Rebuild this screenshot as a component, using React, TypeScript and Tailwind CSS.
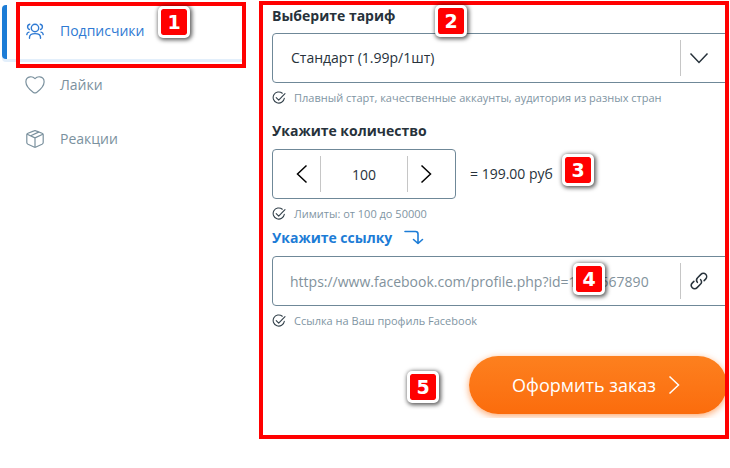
import { useState } from 'react';
import type { ReactNode } from 'react';
import clsx from 'clsx';

const MIN_COUNT = 100;
const MAX_COUNT = 50000;
const PRICE = 1.99;

function UsersIcon() {
  return (
    <svg viewBox="0 0 18 16" className="w-[18px] h-4" fill="none" stroke="currentColor" strokeWidth="1.4" strokeLinecap="round">
      <circle cx="9" cy="5" r="3.7" />
      <path d="M3.500 15.200v-1c0-2.300 2-3.600 5.500-3.600s5.500 1.300 5.500 3.600v1" />
      <path d="M3.800 1.200C2.300 1.500 1.500 2.600 1.600 4.100c.1 1.100.7 2 1.800 2.400M14.200 1.200c1.500.3 2.300 1.400 2.200 2.900-.1 1.100-.7 2-1.800 2.400" />
      <path d="M.8 11.600c.1-1.400.8-2.300 2.200-2.500M17.200 11.600c-.1-1.400-.8-2.300-2.200-2.500" />
    </svg>
  );
}

function HeartIcon() {
  return (
    <svg viewBox="0 0 20 18" className="w-5 h-[18px]" fill="none" stroke="currentColor" strokeWidth="1.2" strokeLinejoin="round">
      <path d="M10 2.600C8.600 1.100 6.800.6 5.200.8 2.600 1.100.8 3.100.9 6 1 9.800 4.200 13.400 8.400 16.400c1 .7 2.200.7 3.200 0C15.800 13.400 19 9.800 19.100 6 19.200 3.100 17.400 1.100 14.800.8 13.200.6 11.400 1.100 10 2.600Z" />
    </svg>
  );
}

function BoxIcon() {
  return (
    <svg viewBox="0 0 18 18" className="w-[18px] h-[18px]" fill="none" stroke="currentColor" strokeWidth="1.2" strokeLinejoin="round" strokeLinecap="round">
      <path d="M8 .9 2 3.300C1.200 3.600.8 4.200.8 5v7.500c0 .9.4 1.400 1.200 1.800l6 2.700c.7.3 1.300.3 2 0l6-2.700c.8-.4 1.200-.9 1.200-1.800V5c0-.8-.4-1.400-1.200-1.700L10 .9C9.300.6 8.700.6 8 .9Z" />
      <path d="M1.200 4.300 9 7.900l7.800-3.600M9 7.900v9M4.700 5.800l7.900-3.700" />
    </svg>
  );
}

function CheckIcon() {
  return (
    <svg viewBox="0 0 14 14" className="w-3.5 h-3.5 shrink-0 text-[#34424c]" fill="none" stroke="currentColor" strokeWidth="1.1" strokeLinecap="round" strokeLinejoin="round">
      <path d="M10.300 2.200A5.600 5.600 0 1 0 12.300 7.400" />
      <path d="m4.200 6.600 2.500 2.600 6.300-6.600" />
    </svg>
  );
}

function LinkIcon() {
  return (
    <svg viewBox="0 0 18 18" className="w-[18px] h-[18px]" fill="none" stroke="currentColor" strokeWidth="1.5" strokeLinecap="round">
      <path d="M7.400 10.400C6.200 8.900 6.300 7 7.600 5.700l3.300-3.300c1.400-1.400 3.500-1.400 4.800-.1s1.300 3.400-.1 4.800l-1.500 1.500" />
      <path d="M10.600 7.600c1.200 1.500 1.100 3.400-.2 4.700l-3.300 3.300c-1.400 1.400-3.500 1.400-4.800.1s-1.300-3.400.1-4.800l1.500-1.500" />
    </svg>
  );
}

function TurnDownIcon() {
  return (
    <svg viewBox="0 0 20 16" className="w-5 h-4" fill="none" stroke="currentColor" strokeWidth="1.600" strokeLinecap="round" strokeLinejoin="round">
      <path d="M1 1.500h10.500c1.500 0 2.500 1 2.500 2.500V13.500M9.500 9.500l4.500 4 4.500-4" />
    </svg>
  );
}

function ChevronIcon({ className }: { className?: string }) {
  return (
    <svg viewBox="0 0 12 20" className={clsx('w-3 h-5 shrink-0', className)} fill="none" stroke="currentColor" strokeWidth="1.500">
      <path d="m1.500 1.500 9 8.500-9 8.500" />
    </svg>
  );
}

const TABS = [
  { id: 'followers', label: 'Подписчики', icon: <UsersIcon /> },
  { id: 'likes', label: 'Лайки', icon: <HeartIcon /> },
  { id: 'reactions', label: 'Реакции', icon: <BoxIcon /> },
];

function StepBadge({ n, className }: { n: number; className: string }) {
  return (
    <span
      className={clsx(
        'absolute flex items-center justify-center w-8 h-8 rounded-[5px] border-3 border-white bg-[#ff0000] bg-clip-padding',
        "font-['DejaVu_Sans'] text-[19px] leading-none font-bold text-white",
        'shadow-[1px_1px_4px_1px_rgba(0,0,0,0.65)]',
        className,
      )}
    >
      {n}
    </span>
  );
}

function Hint({ children }: { children: ReactNode }) {
  return (
    <p className="flex items-center gap-2 h-7 pt-px text-[11px] text-[#7f95a3]">
      <CheckIcon />
      {children}
    </p>
  );
}

function Divider() {
  return <span className="w-px h-9 shrink-0 bg-[#c6c6c6]" />;
}

export default function App() {
  const [tab, setTab] = useState('followers');
  const [count, setCount] = useState(100);
  const [link, setLink] = useState('');

  const changeCount = (next: number) => {
    setCount(Math.min(MAX_COUNT, Math.max(MIN_COUNT, next)));
  };

  return (
    <main className="flex items-start gap-4 pr-px bg-white font-['Open_Sans','Noto_Sans',sans-serif] text-sm text-[#27323b]">
      <nav className="w-[243px] shrink-0 pl-0.5 pt-[5px]">
        {TABS.map(({ id, label, icon }, i) => (
          <div key={id} className="relative">
            <button
              type="button"
              onClick={() => setTab(id)}
              className={clsx(
                'flex items-center w-full h-[54px] pb-0.5 border-l-5 rounded-l-sm',
                tab === id
                  ? 'border-[#1c7cd6] text-[#2f7ad3] shadow-[0_3px_0_#e3effb]'
                  : 'border-transparent text-[#7b919e]',
              )}
            >
              <span className="flex justify-center w-[53px] pl-0.5">{icon}</span>
              {label}
            </button>
            {i === 0 && (
              <div className="absolute left-3.5 -right-[3px] -top-[3px] -bottom-[9px] border-4 border-[#ff0000] pointer-events-none">
                <StepBadge n={1} className="left-[138px] top-0" />
              </div>
            )}
          </div>
        ))}
      </nav>

      <section className="relative flex-1 min-w-0 mt-px pb-[21px]">
        <form className="flex flex-col pl-[13px] pt-[5px] pb-1 overflow-hidden" onSubmit={(e) => e.preventDefault()}>
          <label htmlFor="plan" className="h-5 leading-5 font-bold">Выберите тариф</label>
          <div className="flex items-center h-[50px] mt-[7px] border border-[#6f8898] rounded-sm">
            <select id="plan" className="flex-1 min-w-0 h-full pl-[18px] appearance-none outline-none">
              <option>Стандарт (1.99р/1шт)</option>
            </select>
            <Divider />
            <span className="flex justify-center w-9 mr-[11px]">
              <ChevronIcon className="rotate-90" />
            </span>
          </div>
          <Hint>Плавный старт, качественные аккаунты, аудитория из разных стран</Hint>

          <label htmlFor="count" className="h-5 mt-2.5 leading-5 font-bold">Укажите количество</label>
          <div className="flex items-center gap-3.5 mt-2">
            <div className="flex items-center w-[184px] h-[50px] border border-[#6f8898] rounded-sm">
              <button
                type="button"
                aria-label="Меньше"
                onClick={() => changeCount(count - 100)}
                className="flex items-center justify-center w-[47px] h-full pl-2.5 text-black"
              >
                <ChevronIcon className="rotate-180" />
              </button>
              <Divider />
              <input
                id="count"
                inputMode="numeric"
                value={count}
                onChange={(e) => setCount(Number(e.target.value) || 0)}
                onBlur={() => changeCount(count)}
                className="flex-1 min-w-0 h-full text-center outline-none"
              />
              <Divider />
              <button
                type="button"
                aria-label="Больше"
                onClick={() => changeCount(count + 100)}
                className="flex items-center justify-center w-[47px] h-full pr-3 text-black"
              >
                <ChevronIcon />
              </button>
            </div>
            <output htmlFor="count">= {(count * PRICE).toFixed(2)} руб</output>
          </div>
          <Hint>Лимиты: от 100 до 50000</Hint>

          <label htmlFor="link" className="flex items-center gap-3 h-5 mt-px leading-5 font-bold text-[#1c7cd6]">
            Укажите ссылку
            <TurnDownIcon />
          </label>
          <div className="flex items-center h-[50px] mt-2 border border-[#6f8898] rounded-sm">
            <input
              id="link"
              value={link}
              onChange={(e) => setLink(e.target.value)}
              placeholder="https://www.facebook.com/profile.php?id=1234567890"
              className="flex-1 min-w-0 h-full pl-[17px] outline-none placeholder:text-[#82929c]"
            />
            <Divider />
            <span className="flex justify-center w-9 mr-[11px]">
              <LinkIcon />
            </span>
          </div>
          <Hint>Ссылка на Ваш профиль Facebook</Hint>

          <button
            type="submit"
            className="flex items-center justify-center gap-3 self-end w-[258px] h-[58px] mt-[22px] mr-0.5 pr-1 rounded-full bg-linear-to-b from-[#fd801e] to-[#fb6c0c] text-lg text-white shadow-[0_2px_7px_rgba(251,108,12,0.6)]"
          >
            Оформить заказ
            <ChevronIcon />
          </button>
        </form>

        <div className="absolute inset-0 border-4 border-[#ff0000] pointer-events-none" />
        <StepBadge n={2} className="left-44 top-1" />
        <StepBadge n={3} className="left-[303px] top-[153px]" />
        <StepBadge n={4} className="left-[314px] top-[262px]" />
        <StepBadge n={5} className="left-[148px] top-[370px]" />
      </section>
    </main>
  );
}
